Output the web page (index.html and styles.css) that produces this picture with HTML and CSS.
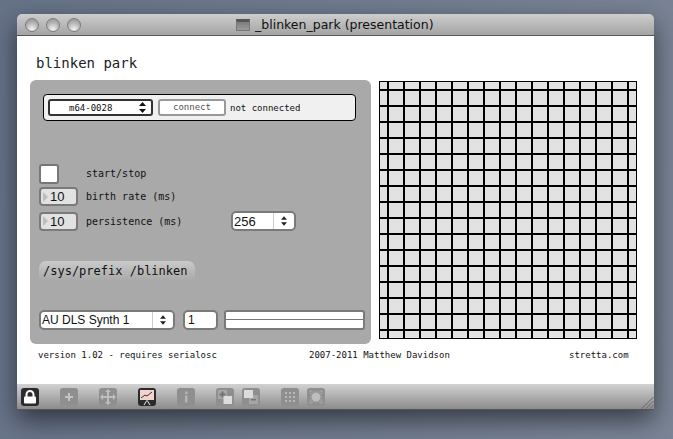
FILE: index.html
```html
<!DOCTYPE html>
<html>
  <head>
    <title>_blinken_park (presentation)</title>
    <meta charset="utf-8" />
    <link rel="stylesheet" href="styles.css">
  </head>
  <body>
    <div class="window">
      <div class="titlebar">
        <div class="lights">
          <span class="light"></span>
          <span class="light"></span>
          <span class="light"></span>
        </div>
        <span class="doc-icon"></span>
        <span class="title">_blinken_park (presentation)</span>
      </div>

      <div class="patcher">
        <h1 class="heading">blinken park</h1>

        <div class="columns">
          <div class="panel">
            <div class="device-bar">
              <div class="device-menu">
                <span class="device-name">m64-0028</span>
                <svg class="arrows" width="7" height="11" viewBox="0 0 7 11"><path d="M3.5 0L7 4H0zM3.5 11L0 7h7z" fill="#111"/></svg>
              </div>
              <div class="connect">connect</div>
              <span class="label">not connected</span>
            </div>

            <div class="row row-toggle">
              <div class="toggle"></div>
              <span class="label label-big label-start">start/stop</span>
            </div>
            <div class="row row-rate">
              <div class="numbox"><i class="tri"></i>10</div>
              <span class="label label-big">birth rate (ms)</span>
            </div>
            <div class="row row-persist">
              <div class="numbox"><i class="tri"></i>10</div>
              <span class="label label-big label-persist">persistence (ms)</span>
              <div class="menu menu-size">
                <span class="menu-text">256</span>
                <span class="menu-arrows"><svg width="6" height="10" viewBox="0 0 7 11"><path d="M3.5 0L7 4H0zM3.5 11L0 7h7z" fill="#222"/></svg></span>
              </div>
            </div>

            <div class="prefix">/sys/prefix /blinken</div>

            <div class="row row-synth">
              <div class="menu menu-synth">
                <span class="menu-text">AU DLS Synth 1</span>
                <span class="menu-arrows"><svg width="6" height="10" viewBox="0 0 7 11"><path d="M3.5 0L7 4H0zM3.5 11L0 7h7z" fill="#222"/></svg></span>
              </div>
              <div class="channel">1</div>
              <div class="slider"><div class="slider-top"></div></div>
            </div>
          </div>

          <div class="grid"></div>
        </div>

        <div class="footer">
          <span class="foot-version">version 1.02 - requires serialosc</span>
          <span class="foot-copy">2007-2011 Matthew Davidson</span>
          <span class="foot-site">stretta.com</span>
        </div>
      </div>

      <div class="toolbar">
        <div class="tool tool-on">
          <svg width="18" height="18" viewBox="0 0 18 18"><path d="M5.500 9V6.500a3.500 3.500 0 0 1 7 0V9" fill="none" stroke="#fff" stroke-width="2"/><rect x="3" y="8.500" width="12" height="7" rx="1" fill="#fff"/></svg>
        </div>
        <div class="tool">
          <svg width="18" height="18" viewBox="0 0 18 18"><path d="M8 5h2v3h3v2h-3v3H8v-3H5V8h3z" fill="#c4c4c4"/></svg>
        </div>
        <div class="tool">
          <svg width="18" height="18" viewBox="0 0 18 18"><path d="M9 1l3 3h-2v4h4V6l3 3-3 3v-2h-4v4h2l-3 3-3-3h2v-4H4v2L1 9l3-3v2h4V4H6z" fill="#bdbdbd"/></svg>
        </div>
        <div class="tool tool-on">
          <svg width="18" height="18" viewBox="0 0 18 18"><rect x="2" y="2" width="14" height="10" fill="#f3d3cd"/><path d="M3 10l4-3 2 1 5-4" fill="none" stroke="#333" stroke-width="1"/><path d="M9 12v1M8.500 13L6 17M9.500 13l2.500 4" fill="none" stroke="#eee" stroke-width="1"/></svg>
        </div>
        <div class="tool">
          <svg width="18" height="18" viewBox="0 0 18 18"><rect x="8" y="3.500" width="2.500" height="2.500" fill="#b4b4b4"/><rect x="8" y="7.500" width="2.500" height="7" fill="#b4b4b4"/></svg>
        </div>
        <div class="tool tool-pair">
          <svg width="18" height="18" viewBox="0 0 18 18"><rect x="2" y="2" width="9" height="9" fill="#a6a6a6"/><path d="M5.500 3.500h2V5.500H9.500v2H7.500V9.500h-2V7.500H3.500v-2h2z" fill="#747474"/><rect x="7.500" y="8" width="8.500" height="8" fill="#dcdcdc"/></svg>
        </div>
        <div class="tool">
          <svg width="18" height="18" viewBox="0 0 18 18"><rect x="7" y="7" width="9" height="9" fill="#a6a6a6"/><rect x="2" y="2" width="9" height="8" fill="#dcdcdc"/><rect x="9" y="11" width="5" height="1.500" fill="#747474"/></svg>
        </div>
        <div class="tool tool-pair">
          <svg width="18" height="18" viewBox="0 0 18 18"><path d="M4 4h2v2H4zM8 4h2v2H8zM12 4h2v2h-2zM4 8h2v2H4zM8 8h2v2H8zM12 8h2v2h-2zM4 12h2v2H4zM8 12h2v2H8zM12 12h2v2h-2z" fill="#b8b8b8"/></svg>
        </div>
        <div class="tool">
          <svg width="18" height="18" viewBox="0 0 18 18"><circle cx="9" cy="9" r="4.500" fill="#bdbdbd"/><path d="M2 4h14M2 14h14M4 2v14M14 2v14" fill="none" stroke="#a8a8a8" stroke-width="1" stroke-dasharray="2 1"/></svg>
        </div>
        <svg class="grip" width="14" height="14" viewBox="0 0 14 14"><path d="M13.500 2L2 13.500M13.500 6L6 13.500M13.500 10L10 13.500" fill="none" stroke="#666" stroke-width="1"/></svg>
      </div>
    </div>
  </body>
</html>
```

FILE: styles.css
```css
body {
    margin: 0;
    height: 439px;
    overflow: hidden;
    background: linear-gradient(100deg, #667287, #7b8597);
}

.window {
    width: 637px;
    height: 396px;
    margin: 14px 0 0 17px;
    display: flex;
    flex-direction: column;
    border-radius: 5px 5px 0 0;
    box-shadow: 0 10px 26px rgba(0, 0, 0, 0.55);
}

.titlebar {
    height: 21px;
    flex: none;
    display: flex;
    align-items: center;
    border-radius: 5px 5px 0 0;
    border-bottom: 1px solid #555;
    background: linear-gradient(#cdcdcd, #a4a4a4);
}

.lights {
    display: flex;
    gap: 7px;
    margin-left: 8px;
}

.light {
    width: 14px;
    height: 14px;
    box-sizing: border-box;
    border-radius: 50%;
    border: 1px solid #7c7c7c;
    background: radial-gradient(circle at 50% 85%, #f2f2f2, #b4b4b4 55%, #8e8e8e);
}

.doc-icon {
    width: 14px;
    height: 12px;
    margin-left: 155px;
    box-sizing: border-box;
    border: 1px solid #777;
    border-top: 3px solid #555;
    background: linear-gradient(#7c7c7c, #9a9a9a);
}

.title {
    margin-left: 5px;
    font-family: "DejaVu Sans", sans-serif;
    font-size: 12.5px;
    color: #111;
}

.patcher {
    flex: 1;
    background: white;
    min-height: 0;
}

.heading {
    margin: 16px 0 6px 19px;
    height: 22px;
    line-height: 22px;
    font-family: "DejaVu Sans Mono", monospace;
    font-size: 14px;
    font-weight: normal;
    color: #222;
}

.columns {
    display: flex;
    gap: 8px;
    margin-left: 13px;
}

.panel {
    width: 341px;
    height: 264px;
    box-sizing: border-box;
    padding: 14px 6px 0 9px;
    border-radius: 6px;
    background: #a9a9a9;
}

.label {
    font-family: "DejaVu Sans Mono", monospace;
    font-size: 9px;
    color: #111;
}

.label-big {
    font-size: 10px;
}

.label-start {
    margin-bottom: 2px;
}

.device-bar {
    height: 27px;
    margin: 0 9px 0 4px;
    box-sizing: border-box;
    display: flex;
    align-items: center;
    padding-left: 4px;
    border: 1px solid #000;
    border-radius: 4px;
    background: #f0f0f0;
}

.device-menu {
    width: 105px;
    height: 17px;
    box-sizing: border-box;
    display: flex;
    align-items: center;
    border: 2px solid #333;
    border-radius: 3px;
    background: white;
    font-family: "DejaVu Sans Mono", monospace;
    font-size: 9px;
    color: #111;
}

.device-name {
    margin-left: 19px;
    flex: 1;
}

.arrows {
    margin-right: 5px;
}

.connect {
    width: 68px;
    height: 17px;
    margin: 0 4px 0 5px;
    box-sizing: border-box;
    border: 2px solid #999;
    border-radius: 3px;
    background: white;
    text-align: center;
    line-height: 13px;
    font-family: "DejaVu Sans Mono", monospace;
    font-size: 9px;
    color: #555;
}

.row {
    display: flex;
    align-items: center;
}

.row-toggle {
    margin-top: 43px;
}

.row-rate {
    margin-top: 3px;
}

.row-persist {
    margin-top: 5px;
}

.row-synth {
    margin-top: 28px;
}

.toggle {
    width: 20px;
    height: 20px;
    margin-right: 27px;
    box-sizing: border-box;
    border: 2px solid #777;
    border-radius: 3px;
    background: white;
}

.numbox {
    width: 39px;
    height: 19px;
    margin-right: 8px;
    box-sizing: border-box;
    display: flex;
    align-items: center;
    border: 2px solid #7a7a7a;
    border-radius: 4px;
    background: #e2e2e2;
    font-family: "Liberation Sans", sans-serif;
    font-size: 13px;
    color: #111;
}

.tri {
    width: 0;
    height: 0;
    margin: 0 2px 0 2px;
    border-left: 5px solid #bdbdbd;
    border-top: 5px solid transparent;
    border-bottom: 5px solid transparent;
}

.label-persist {
    width: 145px;
}

.menu {
    height: 20px;
    box-sizing: border-box;
    display: flex;
    align-items: center;
    border: 2px solid #7a7a7a;
    border-radius: 5px;
    background: white;
    font-family: "Liberation Sans", sans-serif;
    color: #111;
}

.menu-size {
    width: 65px;
    font-size: 13px;
}

.menu-synth {
    width: 136px;
    font-size: 12px;
}

.menu-text {
    flex: 1;
    padding-left: 1px;
}

.menu-arrows {
    width: 20px;
    height: 100%;
    display: flex;
    align-items: center;
    justify-content: center;
    border-left: 1px solid #ccc;
}

.prefix {
    width: 156px;
    height: 21px;
    margin-top: 30px;
    padding-left: 4px;
    box-sizing: border-box;
    border-radius: 7px;
    background: linear-gradient(#cbcbcb, #b4b4b4 60%, #a8a8a8);
    line-height: 21px;
    font-family: "DejaVu Sans Mono", monospace;
    font-size: 12px;
    color: #111;
}

.channel {
    width: 35px;
    height: 20px;
    margin: 0 6px 0 8px;
    padding-left: 3px;
    box-sizing: border-box;
    border: 2px solid #7a7a7a;
    border-radius: 5px;
    background: white;
    line-height: 16px;
    font-family: "Liberation Sans", sans-serif;
    font-size: 12px;
    color: #111;
}

.slider {
    width: 141px;
    height: 20px;
    box-sizing: border-box;
    border: 2px solid #7a7a7a;
    border-radius: 3px;
    background: white;
}

.slider-top {
    height: 7px;
    border-bottom: 1px solid #777;
}

.grid {
    width: 258px;
    height: 258px;
    margin-top: 1px;
    box-sizing: border-box;
    border: 1px solid #000;
    background-color: #e2e2e2;
    background-image:
        linear-gradient(#000 2px, transparent 2px),
        linear-gradient(90deg, #000 2px, transparent 2px);
    background-size: 16px 16px;
    background-position: 0 7px, 7px 0;
}

.footer {
    display: flex;
    margin: 5px 0 0 21px;
    height: 12px;
    line-height: 12px;
    font-family: "DejaVu Sans Mono", monospace;
    font-size: 9px;
    color: #111;
}

.foot-version {
    width: 271px;
}

.foot-copy {
    width: 260px;
}

.toolbar {
    height: 26px;
    flex: none;
    position: relative;
    box-sizing: border-box;
    display: flex;
    gap: 21px;
    padding: 4px 0 0 4px;
    border-bottom: 1px solid #555;
    background: linear-gradient(#d2d2d2, #8c8c8c);
}

.tool {
    width: 18px;
    height: 18px;
    border-radius: 3px;
    background: #8f8f8f;
}

.tool-on {
    background: #2b2b2b;
}

.tool-pair {
    margin-right: -13px;
}

.grip {
    position: absolute;
    right: 0;
    bottom: 0;
}
```
